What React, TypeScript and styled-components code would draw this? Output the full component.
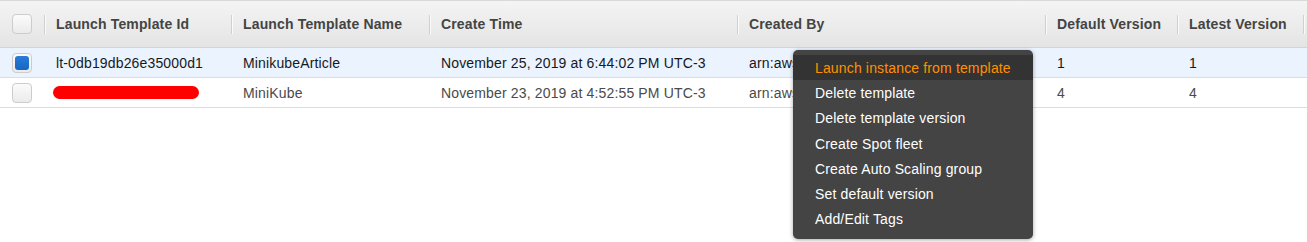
import React from 'react';
import styled, { createGlobalStyle } from 'styled-components';

const GlobalStyle = createGlobalStyle`
  body {
    margin: 0;
    background: #ffffff;
    font-family: "Liberation Sans", Arial, sans-serif;
    letter-spacing: 0.15px;
  }
`;

const columns = '44px 187px 198px 308px 308px 132px 126px 1fr';

interface TemplateRow {
  id: string;
  name: string;
  created: string;
  createdBy: string;
  defaultVersion: string;
  latestVersion: string;
  selected: boolean;
  redacted?: boolean;
}

const rows: TemplateRow[] = [
  {
    id: 'lt-0db19db26e35000d1',
    name: 'MinikubeArticle',
    created: 'November 25, 2019 at 6:44:02 PM UTC-3',
    createdBy: 'arn:aws:iam::000000000000:user/admin',
    defaultVersion: '1',
    latestVersion: '1',
    selected: true,
  },
  {
    id: '',
    name: 'MiniKube',
    created: 'November 23, 2019 at 4:52:55 PM UTC-3',
    createdBy: 'arn:aws:iam::000000000000:user/admin',
    defaultVersion: '4',
    latestVersion: '4',
    selected: false,
    redacted: true,
  },
];

const headers = [
  'Launch Template Id',
  'Launch Template Name',
  'Create Time',
  'Created By',
  'Default Version',
  'Latest Version',
];

const menuItems = [
  'Launch instance from template',
  'Delete template',
  'Delete template version',
  'Create Spot fleet',
  'Create Auto Scaling group',
  'Set default version',
  'Add/Edit Tags',
];

const App: React.FC = () => {
  return (
    <>
      <GlobalStyle />
      <Wrapper>
        <Header>
          <CheckCell>
            <Checkbox />
          </CheckCell>
          {headers.map((h) => (
            <HeaderCell key={h}>{h}</HeaderCell>
          ))}
          <HeaderCell />
        </Header>

        {rows.map((row, i) => (
          <Row key={i} $selected={row.selected}>
            <CheckCell>
              <Checkbox>{row.selected && <CheckFill />}</Checkbox>
            </CheckCell>
            <Cell $dim={!row.selected}>
              {row.redacted ? <Redaction /> : row.id}
            </Cell>
            <Cell $dim={!row.selected}>{row.name}</Cell>
            <Cell $dim={!row.selected}>{row.created}</Cell>
            <Cell $dim={!row.selected}>{row.createdBy}</Cell>
            <Cell $dim={!row.selected}>{row.defaultVersion}</Cell>
            <Cell $dim={!row.selected}>{row.latestVersion}</Cell>
            <Cell />
          </Row>
        ))}

        {/* context menu opened on the selected row */}
        <Menu>
          {menuItems.map((item, i) => (
            <MenuItem key={item} $active={i === 0}>
              {item}
            </MenuItem>
          ))}
        </Menu>
      </Wrapper>
    </>
  );
};

const Wrapper = styled.div`
  position: relative;
  width: 1307px;
  height: 242px;
  overflow: hidden;
  background: #ffffff;
`;

const Header = styled.div`
  display: grid;
  grid-template-columns: ${columns};
  box-sizing: border-box;
  height: 48px;
  border-top: 1px solid #d9d9d9;
  border-bottom: 1px solid #d5d5d5;
  background: linear-gradient(#f4f4f4, #e4e4e4);
`;

const HeaderCell = styled.div`
  position: relative;
  display: flex;
  align-items: center;
  padding-left: 12px;
  font-size: 14px;
  font-weight: bold;
  color: #444444;
  white-space: nowrap;

  &::before {
    content: '';
    position: absolute;
    left: 0;
    top: 14px;
    bottom: 13px;
    width: 1px;
    background: #d0d0d0;
    box-shadow: 1px 0 0 #fafafa;
  }
`;

const Row = styled.div<{ $selected: boolean }>`
  display: grid;
  grid-template-columns: ${columns};
  height: 30px;
  box-sizing: border-box;
  border-bottom: 1px solid #dddddd;
  background: ${({ $selected }) => ($selected ? '#eaf3fe' : '#ffffff')};
`;

const CheckCell = styled.div`
  display: flex;
  align-items: center;
  padding-left: 12px;
`;

const Checkbox = styled.div`
  width: 20px;
  height: 20px;
  box-sizing: border-box;
  border: 1px solid #cccccc;
  border-radius: 4px;
  background: linear-gradient(#fbfbfb, #ebebeb);
  padding: 2px;
  display: flex;
`;

const CheckFill = styled.div`
  flex: 1;
  border-radius: 3px;
  background: linear-gradient(#2a7ad6, #1666c5);
`;

const Cell = styled.div<{ $dim?: boolean }>`
  display: flex;
  align-items: center;
  padding-left: 12px;
  font-size: 14px;
  color: ${({ $dim }) => ($dim ? '#4a4a4a' : '#16191f')};
  white-space: nowrap;
  overflow: hidden;
`;

const Redaction = styled.div`
  width: 146px;
  height: 13px;
  margin-left: -3px;
  border-radius: 7px;
  background: #ff0000;
`;

const Menu = styled.div`
  position: absolute;
  left: 793px;
  top: 50px;
  width: 240px;
  padding: 5px 0 7px;
  box-sizing: border-box;
  background: #444444;
  border-radius: 5px;
  box-shadow: 0 1px 4px rgba(0, 0, 0, 0.35);
`;

const MenuItem = styled.div<{ $active?: boolean }>`
  height: 25.3px;
  display: flex;
  align-items: center;
  padding-left: 22px;
  font-size: 14px;
  color: ${({ $active }) => ($active ? '#ff9000' : '#ffffff')};
  background: ${({ $active }) => ($active ? '#333333' : 'transparent')};
  white-space: nowrap;
`;

export default App;
